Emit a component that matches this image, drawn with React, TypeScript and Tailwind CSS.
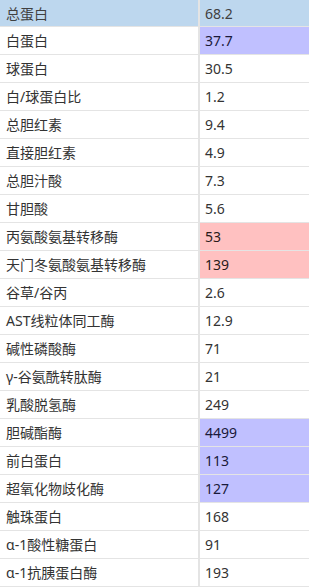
import React from 'react';

type Row = { name: string; value: string; tone?: 'low' | 'high' };

const ROWS: Row[] = [
  { name: '白蛋白', value: '37.7', tone: 'low' },
  { name: '球蛋白', value: '30.5' },
  { name: '白/球蛋白比', value: '1.2' },
  { name: '总胆红素', value: '9.4' },
  { name: '直接胆红素', value: '4.9' },
  { name: '总胆汁酸', value: '7.3' },
  { name: '甘胆酸', value: '5.6' },
  { name: '丙氨酸氨基转移酶', value: '53', tone: 'high' },
  { name: '天门冬氨酸氨基转移酶', value: '139', tone: 'high' },
  { name: '谷草/谷丙', value: '2.6' },
  { name: 'AST线粒体同工酶', value: '12.9' },
  { name: '碱性磷酸酶', value: '71' },
  { name: 'γ-谷氨酰转肽酶', value: '21' },
  { name: '乳酸脱氢酶', value: '249' },
  { name: '胆碱酯酶', value: '4499', tone: 'low' },
  { name: '前白蛋白', value: '113', tone: 'low' },
  { name: '超氧化物歧化酶', value: '127', tone: 'low' },
  { name: '触珠蛋白', value: '168' },
  { name: 'α-1酸性糖蛋白', value: '91' },
  { name: 'α-1抗胰蛋白酶', value: '193' },
];

const toneClass = (tone?: Row['tone']) => {
  if (tone === 'low') return 'bg-[#c0c0ff] text-[#1a1a3a]';
  if (tone === 'high') return 'bg-[#ffc1c1] text-[#2a1a1a]';
  return 'bg-white text-[#333333]';
};

export default function App() {
  return (
    <div
      className="w-[309px] h-[588px] bg-white text-[14px] overflow-hidden"
      style={{ fontFamily: '"Noto Sans", "Noto Sans CJK SC", sans-serif' }}
    >
      {/* header row */}
      <div className="flex h-[27px] border-b border-[#e4e4e4] bg-[#bdd7ee] text-[#404040]">
        <div className="w-[200px] border-r-2 border-[#e4e4e4] pl-[6px] flex items-center">总蛋白</div>
        <div className="flex-1 pl-[5px] flex items-center">68.2</div>
      </div>

      {ROWS.map((row) => (
        <div key={row.name} className="flex h-[28px] border-b border-[#e4e4e4]">
          <div className="w-[200px] border-r-2 border-[#e4e4e4] pl-[6px] flex items-center text-[#333333]">
            {row.name}
          </div>
          <div className={`flex-1 pl-[5px] flex items-center ${toneClass(row.tone)}`}>{row.value}</div>
        </div>
      ))}
    </div>
  );
}
